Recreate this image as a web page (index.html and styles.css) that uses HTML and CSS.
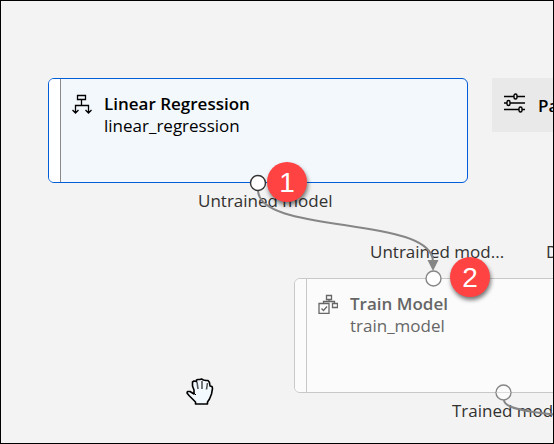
FILE: index.html
```html
<!DOCTYPE html>
<html lang="en">
<head>
<meta charset="utf-8">
<title>Pipeline designer</title>
<link rel="stylesheet" href="styles.css">
</head>
<body>
<main class="canvas">
  <article class="node node-regression selected">
    <div class="stripe"></div>
    <svg class="icon" viewBox="0 0 20 20" fill="none" stroke="currentColor" stroke-width="1.3"><path d="M5.500 1.500h8v4h-8zM9.500 5.500v6M3.500 18v-6.500h13v6.500M.5 16l3 3 3-3M13.500 16l3 3 3-3"/></svg>
    <div class="text"><h2>Linear Regression</h2><p>linear_regression</p></div>
  </article>

  <article class="node node-params">
    <svg class="icon" viewBox="0 0 22 20" fill="#e9e9e9" stroke="currentColor" stroke-width="1.4"><path d="M0 3.500h21M0 10h21M0 16.500h21"/><rect x="10" y="1" width="3" height="5" rx="1.500"/><rect x="3" y="7.500" width="3" height="5" rx="1.500"/><rect x="15" y="14" width="3" height="5" rx="1.500"/></svg>
    <div class="text"><h2>Parameters</h2></div>
  </article>

  <article class="node node-train">
    <div class="stripe"></div>
    <svg class="icon" viewBox="0 0 20 20" fill="none" stroke="currentColor" stroke-width="1.3"><path d="M8.500 1.500h5v4h-5zM11 5.500v2M5.500 9.500v-2h11v2M14.500 9.500h5v4h-5zM1 9.500h10v10H1z"/><path d="M3.500 14.500l2 2 3.500-4"/></svg>
    <div class="text"><h2>Train Model</h2><p>train_model</p></div>
  </article>

  <span class="label label-out">Untrained model</span>
  <span class="label label-in">Untrained mod...</span>
  <span class="label label-data">Dataset</span>
  <span class="label label-trained">Trained model</span>

  <svg class="edges" width="640" height="480" fill="none" stroke="#868686" stroke-width="2">
    <path d="M258 190C258 235 433 215 433 262"/>
    <path d="M504 400C504 408 525 412 560 415"/>
    <path d="M427.500 260h11L433 271z" fill="#868686" stroke="none"/>
    <g fill="#fff" stroke-width="1.400">
      <circle cx="258" cy="183" r="7.500" stroke="#333"/>
      <circle cx="433.500" cy="278.500" r="7.500"/>
      <circle cx="503.500" cy="392.500" r="7.500" fill="#fbfbfb"/>
      <path d="M496.500 392.500h14" stroke="#ddd" stroke-width="1"/>
    </g>
  </svg>

  <span class="badge badge-one">1</span>
  <span class="badge badge-two">2</span>

  <svg class="hand" viewBox="0 0 28 28" fill="#f2f9ff" stroke="#000" stroke-width="1.600" stroke-linejoin="round"><path d="M9.500 26v-2L6 20.500l-3-3-2-2.500.5-1.500H4L8 16V12L6.500 8V4L8 3l2.500.5V2L12 1.500h2L15.500 1l2 1 2.500.5h2l1.500 2L24 8l2 .5.500 2L25.500 16l-2 5-2 3v2z"/><path d="M11 4l1 7M16 3v8M21.500 5L20.500 11.500" stroke="#555"/><path d="M8 15l2 2" stroke-width="1"/></svg>
</main>
</body>
</html>
```
FILE: styles.css
```css
* {
  box-sizing: border-box;
}

body {
  margin: 0;
  font: 17px/22px "Open Sans", "Noto Sans", sans-serif;
  color: #000;
}

.canvas {
  position: relative;
  height: 100vh;
  overflow: hidden;
  background: #f3f3f3;
}

.canvas::after {
  content: "";
  position: absolute;
  inset: 0;
  border: 1px solid #000;
}

.node {
  position: absolute;
  display: flex;
  overflow: hidden;
}

.node-regression {
  left: 48px;
  top: 78px;
  width: 420px;
  height: 105px;
}

.node-train {
  left: 294px;
  top: 278px;
  width: 420px;
  height: 115px;
  background: #fbfbfb;
  border: 1px solid #c8c8c8;
  border-radius: 6px;
  color: #666;
}

.node-params {
  left: 492px;
  top: 78px;
  width: 200px;
  height: 54px;
  padding-left: 1px;
  background: #e9e9e9;
}

.selected {
  background: #f3f8fd;
  border: 1px solid #015cda;
  border-radius: 6px;
}

.stripe {
  width: 12px;
  background: #fff;
  border-right: 1px solid #8a8a8a;
}

.node-train .stripe {
  background: #fbfbfb;
  border-color: #c8c8c8;
}

.icon {
  width: 20px;
  height: 20px;
  margin: 15px 0 0 11px;
}

.node-params .icon {
  width: 22px;
}

.text {
  margin: 14px 0 0 12px;
}

.node-params .text {
  margin-top: 17px;
}

h2,
p {
  margin: 0;
  font-size: 17px;
  line-height: 22px;
  font-weight: 400;
}

h2 {
  font-weight: 600;
}

.label {
  position: absolute;
  color: #323130;
  white-space: nowrap;
}

.label-out {
  left: 198px;
  top: 190px;
}

.label-in {
  left: 370px;
  top: 241px;
}

.label-data {
  left: 546px;
  top: 241px;
}

.label-trained {
  left: 452px;
  top: 400px;
}

.edges {
  position: absolute;
  left: 0;
  top: 0;
}

.badge {
  position: absolute;
  width: 40px;
  height: 40px;
  border-radius: 50%;
  background: #ff4242;
  box-shadow: 1px 3px 4px #0008;
  color: #fff;
  font: 28px/42px "Liberation Sans", sans-serif;
  text-align: center;
}

.badge-one {
  left: 267px;
  top: 162px;
}

.badge-two {
  left: 450px;
  top: 257px;
}

.hand {
  position: absolute;
  left: 186px;
  top: 378px;
  width: 28px;
  height: 28px;
}
```
